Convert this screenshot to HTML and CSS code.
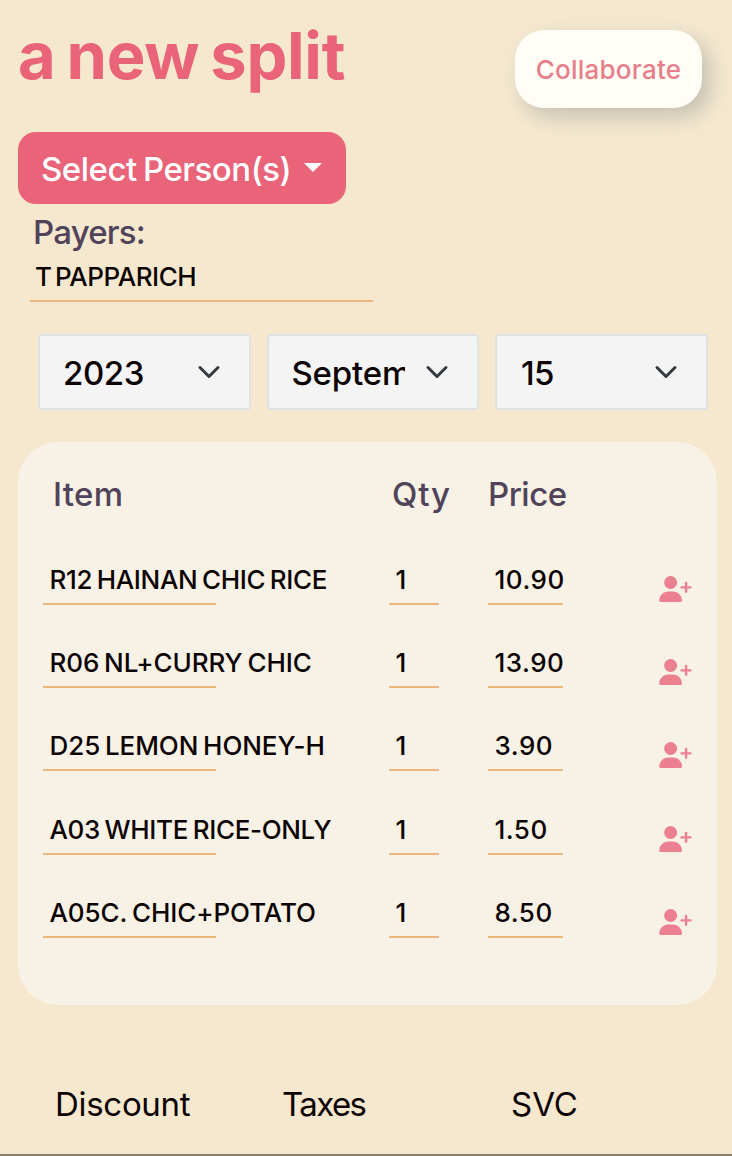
FILE: index.html
```html
<!DOCTYPE html>
<html lang="en">
<head>
<meta charset="utf-8">
<title>a new split</title>
<link rel="stylesheet" href="styles.css">
</head>
<body>
<svg width="0" height="0" class="defs">
  <symbol id="add" viewBox="0 0 640 512"><path d="M96 128a128 128 0 1 1 256 0A128 128 0 1 1 96 128zM0 482.300C0 383.800 79.800 304 178.300 304h91.400C368.200 304 448 383.800 448 482.300c0 16.400-13.300 29.700-29.700 29.700H29.700C13.300 512 0 498.700 0 482.300zM504 312V248H440c-13.300 0-24-10.700-24-24s10.700-24 24-24h64V136c0-13.300 10.700-24 24-24s24 10.700 24 24v64h64c13.300 0 24 10.700 24 24s-10.700 24-24 24H552v64c0 13.300-10.700 24-24 24s-24-10.700-24-24z"/></symbol>
  <symbol id="chev" viewBox="0 0 16 16"><path fill="none" stroke="#343a40" stroke-linecap="round" stroke-linejoin="round" stroke-width="2" d="m2 5 6 6 6-6"/></symbol>
</svg>
<main class="page">
  <header class="header">
    <h1 class="title">a new split</h1>
    <button class="collab"><span>Collaborate</span></button>
  </header>
  <button class="select-person"><span>Select Person(s)</span><i class="caret"></i></button>
  <div class="payers">Payers:</div>
  <div class="merchant"><span>T PAPPARICH</span></div>
  <div class="dates">
    <div class="drop"><span class="val year">2023</span><svg class="chev"><use href="#chev"/></svg></div>
    <div class="drop"><span class="val month">September</span><svg class="chev"><use href="#chev"/></svg></div>
    <div class="drop"><span class="val day">15</span><svg class="chev"><use href="#chev"/></svg></div>
  </div>
  <section class="card">
    <div class="head"><span class="h-item">Item</span><span class="h-qty">Qty</span><span class="h-price">Price</span></div>
    <div class="row"><div class="cell name tight">R12 HAINAN CHIC RICE</div><div class="cell qty">1</div><div class="cell price">10.90</div><svg class="add"><use href="#add"/></svg></div>
    <div class="row"><div class="cell name">R06 NL+CURRY CHIC</div><div class="cell qty">1</div><div class="cell price">13.90</div><svg class="add"><use href="#add"/></svg></div>
    <div class="row"><div class="cell name">D25 LEMON HONEY-H</div><div class="cell qty">1</div><div class="cell price">3.90</div><svg class="add"><use href="#add"/></svg></div>
    <div class="row"><div class="cell name tight">A03 WHITE RICE-ONLY</div><div class="cell qty">1</div><div class="cell price">1.50</div><svg class="add"><use href="#add"/></svg></div>
    <div class="row"><div class="cell name">A05C. CHIC+POTATO</div><div class="cell qty">1</div><div class="cell price">8.50</div><svg class="add"><use href="#add"/></svg></div>
  </section>
  <footer class="totals"><span class="disc">Discount</span><span class="tax">Taxes</span><span class="svc">SVC</span></footer>
</main>
</body>
</html>
```
FILE: styles.css
```css
* { box-sizing: border-box; }
body { margin: 0; background: #f5e8cf; font-family: Inter, "Liberation Sans", sans-serif; font-weight: 500; color: #0c0404; }
.defs { display: block; height: 0; }
button { font: inherit; border: 0; padding: 0; }
.page { height: 1156px; overflow: hidden; border-bottom: 2px solid #8b8070; white-space: nowrap; display: flex; flex-direction: column; }

.header { display: flex; justify-content: space-between; height: 132px; padding: 0 30px 0 18px; flex: none; }
.title { margin: 17px 0 0; font-size: 65px; line-height: 78px; font-weight: 700; color: #e96379; letter-spacing: -.3px; word-spacing: -4px; }
.collab { margin-top: 30px; width: 187px; height: 78px; border-radius: 29px; background: #fffdf5; color: #e77f8b; font-size: 26px; letter-spacing: .25px; box-shadow: 8px 9px 20px rgba(125,135,135,.4); }
.select-person { width: 328px; height: 72px; flex: none; margin-left: 18px; border-radius: 18px; background: #e96379; color: #fff; font-size: 33px; letter-spacing: -.5px; word-spacing: -2px; display: flex; align-items: center; padding: 1px 0 0 23px; }
.caret { margin: -2px 0 0 13px; border: 9px solid transparent; border-top-color: #fff; border-bottom: 0; }
.payers { height: 56px; flex: none; line-height: 56px; padding-left: 33px; font-size: 33px; color: #51445a; letter-spacing: -.8px; }
.merchant { margin-left: 30px; width: 343px; height: 42px; flex: none; line-height: 34px; padding-left: 5px; font-size: 26px; letter-spacing: -.45px; word-spacing: -3px; border-bottom: 2px solid #ecb681; }

.dates { display: flex; gap: 16px; margin: 32px 0 0 38px; height: 76px; flex: none; }
.drop { width: 212.500px; background: #f4f4f5; border: 2px solid #dfe1e3; border-radius: 4px; display: flex; align-items: center; padding: 2px 28px 0 23px; justify-content: space-between; font-size: 33px; }
.val { width: 113px; overflow: hidden; line-height: 48px; letter-spacing: -.2px; }
.year { letter-spacing: -.4px; }
.day { padding-left: 1px; letter-spacing: -.8px; }
.chev { width: 24px; height: 24px; margin-top: -3px; }

.card { margin: 32px 0 0 18px; width: 699px; height: 563px; flex: none; border-radius: 40px; background: #f8f1e5; padding: 28px 25px 0; }
.head { display: grid; grid-template-columns: 339px 96px 120px; height: 83px; line-height: 48px; padding-left: 10px; font-size: 33px; color: #51445a; }
.h-item { letter-spacing: .3px; }
.h-qty { letter-spacing: .9px; }
.h-price { letter-spacing: -.5px; }
.row { display: flex; align-items: flex-start; height: 83.200px; font-size: 26px; }
.cell { height: 52px; line-height: 54px; border-bottom: 2px solid #ecb681; padding-left: 6.500px; flex: none; }
.name { width: 173px; margin-right: 173px; word-spacing: -2px; letter-spacing: -.08px; }
.tight { letter-spacing: -.34px; }
.qty { width: 50px; margin-right: 49px; }
.price { width: 75px; margin-right: 96px; letter-spacing: .5px; }
.add { width: 33px; height: 26px; margin-top: 23px; fill: #eb8190; }

.totals { display: grid; grid-template-columns: 228px 228px 150px; margin: 74px 0 0 55px; font-size: 33px; line-height: 50px; font-weight: 400; }
.disc { letter-spacing: -.3px; }
.tax { margin-left: -1px; letter-spacing: -1.600px; }
```
